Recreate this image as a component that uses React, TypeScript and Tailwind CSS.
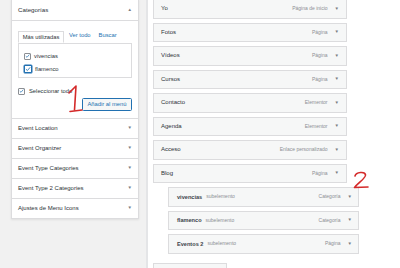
import { FC } from 'react';

const font = { fontFamily: '"Liberation Sans", Arial, sans-serif' };

const topItems = [
  { title: "Yo", type: "Página de inicio" },
  { title: "Fotos", type: "Página" },
  { title: "Vídeos", type: "Página" },
  { title: "Cursos", type: "Página" },
  { title: "Contacto", type: "Elementor" },
  { title: "Agenda", type: "Elementor" },
  { title: "Acceso", type: "Enlace personalizado" },
  { title: "Blog", type: "Página" },
];

const subItems = [
  { title: "vivencias", type: "Categoría" },
  { title: "flamenco", type: "Categoría" },
  { title: "Eventos 2", type: "Página" },
];

const sections = [
  "Event Location",
  "Event Organizer",
  "Event Type Categories",
  "Event Type 2 Categories",
  "Ajustes de Menu Icons",
];

const Check: FC<{ focus?: boolean }> = ({ focus }) => (
  <span
    className={
      focus
        ? "w-[8px] h-[8px] border border-[#2271b1] shadow-[0_0_0_0.5px_#2271b1] bg-white flex items-center justify-center rounded-[1px]"
        : "w-[7px] h-[7px] border border-[#8c8f94] bg-white flex items-center justify-center rounded-[1px]"
    }
  >
    <svg viewBox="0 0 10 10" className="w-[6px] h-[6px]">
      <path d="M1.5 5.2 L4 7.6 L8.6 2.2" fill="none" stroke="#2271b1" strokeWidth="1.4" />
    </svg>
  </span>
);

const Arrow: FC<{ up?: boolean }> = ({ up }) => (
  <span className="text-[4.5px] text-[#787c82] leading-none">{up ? "▲" : "▼"}</span>
);

const MenuItem: FC<{ title: string; type: string; sub?: boolean }> = ({ title, type, sub }) => (
  <div
    className={
      sub
        ? "ml-[15px] w-[191px] h-[19.5px] shrink-0 bg-[#f6f7f7] border border-[#dcdcde] flex items-center pl-[8px] pr-[6px]"
        : "w-[194px] h-[19.5px] shrink-0 bg-[#f6f7f7] border border-[#dcdcde] flex items-center pl-[7px] pr-[7px]"
    }
  >
    <span className={sub ? "text-[5.6px] font-bold text-[#3c434a]" : "text-[6px] text-[#2c3338]"}>{title}</span>
    {sub && <span className="ml-[4px] text-[5px] text-[#8c8f94]">subelemento</span>}
    <span className="ml-auto text-[5px] text-[#8c8f94] mr-[7px]">{type}</span>
    <Arrow />
  </div>
);

const App: FC = () => (
  <div className="w-[400px] h-[268px] flex overflow-hidden bg-white relative" style={font}>
    {/* left column */}
    <div className="w-[148px] h-full bg-[#f1f1f1] border-r-[2px] border-[#e4e5e7] pl-[11px] shrink-0">
      <div className="w-[128px] -mt-[1px] bg-white border border-[#dcdcde] shadow-[0_1px_2px_rgba(0,0,0,0.08)]">
        <div className="h-[21px] flex items-center justify-between px-[6px] border-b border-[#dcdcde]">
          <span className="text-[6.2px] text-[#2c3338]">Categorías</span>
          <Arrow up />
        </div>
        <div className="h-[97px] px-[6px] pt-[11px]">
          <div className="flex items-end h-[11px] text-[5.8px]">
            <span className="h-[12px] w-[46px] flex items-center justify-center bg-white border border-[#dcdcde] border-b-white relative z-10 text-[#2c3338]">
              Más utilizadas
            </span>
            <span className="ml-[5px] mb-[3px] text-[#2271b1]">Ver todo</span>
            <span className="ml-[8px] mb-[3px] text-[#2271b1]">Buscar</span>
          </div>
          <div className="h-[35px] border border-[#dcdcde] pl-[5px] pt-[8px] flex flex-col gap-[4px]">
            <div className="flex items-center gap-[3px]">
              <Check />
              <span className="text-[5.8px] text-[#2c3338]">vivencias</span>
            </div>
            <div className="flex items-center gap-[3px]">
              <Check focus />
              <span className="text-[5.8px] text-[#2c3338]">flamenco</span>
            </div>
          </div>
          <div className="mt-[9px] flex items-center gap-[4px]">
            <Check />
            <span className="text-[5.8px] text-[#2c3338]">Seleccionar todo</span>
          </div>
          <div className="flex justify-end mt-[2px]">
            <span className="w-[50px] h-[13px] border border-[#2271b1] rounded-[1.5px] bg-[#f6f7f7] text-[#2271b1] text-[5.8px] flex items-center justify-center">
              Añadir al menú
            </span>
          </div>
        </div>
        {sections.map((s) => (
          <div key={s} className="h-[20px] border-t border-[#dcdcde] flex items-center justify-between px-[6px]">
            <span className="text-[6px] text-[#2c3338]">{s}</span>
            <Arrow />
          </div>
        ))}
      </div>
    </div>

    {/* right column */}
    <div className="flex-1 pl-[5px]">
      <div className="-mt-[1px] flex flex-col gap-[4px]">
        {topItems.map((it) => (
          <MenuItem key={it.title} {...it} />
        ))}
        {subItems.map((it) => (
          <MenuItem key={it.title} {...it} sub />
        ))}
      </div>
      <div className="mt-[9px] w-[74px] h-[10px] border border-[#dcdcde] bg-[#f6f7f7]" />
    </div>

    {/* handwritten annotations */}
    <svg className="absolute left-[66px] top-[84px] w-[18px] h-[30px]" viewBox="0 0 18 30">
      <path d="M3 9 L10 2 L8.5 26" fill="none" stroke="#d42a2a" strokeWidth="1.6" strokeLinecap="round" strokeLinejoin="round" />
      <path d="M4 27.5 L16 26" fill="none" stroke="#d42a2a" strokeWidth="1.6" strokeLinecap="round" />
    </svg>
    <svg className="absolute left-[352px] top-[171px] w-[18px] h-[19px]" viewBox="0 0 18 19">
      <path d="M3 5 C4 1 13 0 13.5 4 C14 7 6 12 2.5 16.5 L16 16" fill="none" stroke="#d42a2a" strokeWidth="1.6" strokeLinecap="round" strokeLinejoin="round" />
    </svg>
  </div>
);

export default App;
